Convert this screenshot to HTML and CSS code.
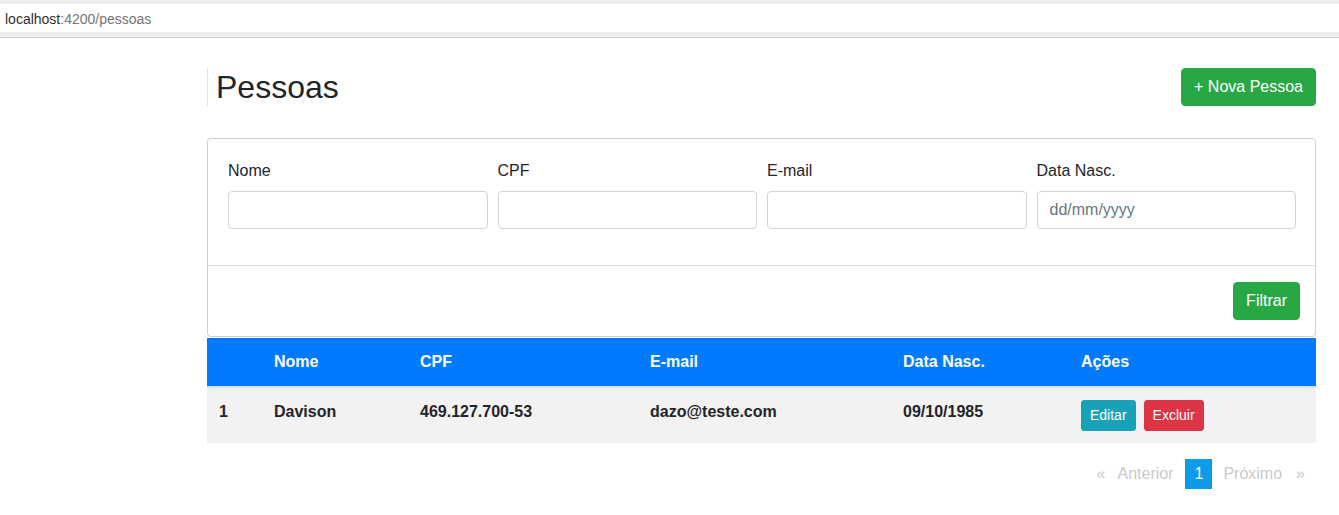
FILE: index.html
```html
<!DOCTYPE html>
<html lang="pt-BR">
<head>
<meta charset="utf-8">
<title>Pessoas</title>
<link rel="stylesheet" href="styles.css">
</head>
<body>
<div class="chrome">
  <div class="urlbar"><span class="host">localhost</span><span class="path">:4200/pessoas</span></div>
</div>
<main class="container">
  <header class="page-header">
    <h1 class="title">Pessoas</h1>
    <button class="btn btn-success btn-lg-ish">+ Nova Pessoa</button>
  </header>

  <section class="card">
    <div class="card-body">
      <div class="field">
        <label class="label">Nome</label>
        <input class="input" type="text">
      </div>
      <div class="field">
        <label class="label">CPF</label>
        <input class="input" type="text">
      </div>
      <div class="field">
        <label class="label">E-mail</label>
        <input class="input" type="text">
      </div>
      <div class="field">
        <label class="label">Data Nasc.</label>
        <input class="input" type="text" placeholder="dd/mm/yyyy">
      </div>
    </div>
    <div class="card-footer">
      <button class="btn btn-success">Filtrar</button>
    </div>
  </section>

  <table class="table">
    <colgroup>
      <col class="c1"><col class="c2"><col class="c3"><col class="c4"><col class="c5"><col class="c6">
    </colgroup>
    <thead>
      <tr>
        <th></th>
        <th>Nome</th>
        <th>CPF</th>
        <th>E-mail</th>
        <th>Data Nasc.</th>
        <th>Ações</th>
      </tr>
    </thead>
    <tbody>
      <tr>
        <td>1</td>
        <td>Davison</td>
        <td>469.127.700-53</td>
        <td>dazo@teste.com</td>
        <td>09/10/1985</td>
        <td>
          <div class="actions">
            <button class="btn btn-sm btn-info">Editar</button>
            <button class="btn btn-sm btn-danger">Excluir</button>
          </div>
        </td>
      </tr>
    </tbody>
  </table>

  <ul class="pagination">
    <li class="disabled prev">Anterior</li>
    <li class="current">1</li>
    <li class="disabled next">Próximo</li>
  </ul>
</main>
</body>
</html>
```

FILE: styles.css
```css
* { box-sizing: border-box; }

html, body {
  margin: 0;
  padding: 0;
  background: #fff;
}

body {
  font-family: "Liberation Sans", Arial, sans-serif;
  font-size: 16px;
  line-height: 24px;
  color: #212529;
}

/* browser bar */
.chrome {
  background: #efeeed;
  padding: 4px 0 5px;
  border-bottom: 1px solid #cfcfcf;
}

.urlbar {
  background: #fff;
  height: 28px;
  padding: 2px 0 0 5px;
  line-height: 26px;
  font-family: "Liberation Sans", Arial, sans-serif;
  font-size: 14px;
}

.host { color: #303030; }
.path { color: #747474; }

/* page */
.container {
  margin-left: 207px;
  width: 1109px;
  padding-top: 30px;
}

.page-header {
  display: flex;
  justify-content: space-between;
  align-items: center;
  height: 38px;
  margin-bottom: 32px;
}

.title {
  margin: 0;
  height: 38px;
  padding-left: 8px;
  border-left: 1px solid #e0e0e0;
  font-size: 32px;
  font-weight: 400;
  line-height: 38px;
  color: #212529;
}

.btn {
  display: inline-block;
  border: 1px solid transparent;
  border-radius: 4px;
  padding: 6px 12px;
  font-family: "Liberation Sans", Arial, sans-serif;
  font-size: 16px;
  line-height: 24px;
  color: #fff;
  cursor: pointer;
}

.btn-success {
  background: #28a745;
  border-color: #28a745;
}

.btn-sm {
  padding: 4px 8px;
  font-size: 14px;
  line-height: 21px;
  border-radius: 3px;
}

.btn-info {
  background: #17a2b8;
  border-color: #17a2b8;
}

.btn-danger {
  background: #dc3545;
  border-color: #dc3545;
}

/* filter card */
.card {
  border: 1px solid #cfcfcf;
  border-radius: 4px;
}

.card-body {
  display: grid;
  grid-template-columns: repeat(4, 1fr);
  column-gap: 10px;
  padding: 20px 19px 36px 20px;
}

.field {
  display: flex;
  flex-direction: column;
}

.label {
  margin-bottom: 8px;
  font-size: 16px;
  line-height: 24px;
}

.input {
  height: 38px;
  padding: 6px 12px;
  border: 1px solid #ced4da;
  border-radius: 4px;
  font-family: "Liberation Sans", Arial, sans-serif;
  font-size: 16px;
  color: #495057;
  background: #fff;
}

.input::placeholder {
  color: #6c757d;
  opacity: 1;
}

.card-footer {
  display: flex;
  justify-content: flex-end;
  border-top: 1px solid #dedede;
  padding: 16px 15px 16px;
}

/* table */
.table {
  width: 1109px;
  margin-top: 1px;
  margin-bottom: 16px;
  border-collapse: collapse;
  table-layout: fixed;
}

.c1 { width: 55px; }
.c2 { width: 146px; }
.c3 { width: 230px; }
.c4 { width: 253px; }
.c5 { width: 178px; }
.c6 { width: 247px; }

.table th,
.table td {
  padding: 12px;
  text-align: left;
  vertical-align: top;
  font-weight: 700;
  line-height: 24px;
}

.table thead th {
  background: #007bff;
  color: #fff;
  border-bottom: 2px solid #dee2e6;
}

.table tbody td {
  background: #f2f2f2;
  color: #212529;
}

.actions {
  display: flex;
  gap: 8px;
}

/* pagination */
.pagination {
  display: flex;
  justify-content: flex-end;
  list-style: none;
  margin: 0;
  padding: 0 1px 0 0;
}

.pagination li {
  padding: 3px 10px;
  margin-right: 1px;
  line-height: 24px;
  font-size: 16px;
}

.pagination li:last-child { margin-right: 0; }

.pagination .disabled { color: #cacaca; }

.pagination .current {
  background: #0d9ae6;
  color: #fefefe;
  padding: 3px 9px 3px 10px;
}

.pagination .prev::before {
  content: "«";
  margin-right: 12px;
}

.pagination .next::after {
  content: "»";
  margin-left: 14px;
}
```
